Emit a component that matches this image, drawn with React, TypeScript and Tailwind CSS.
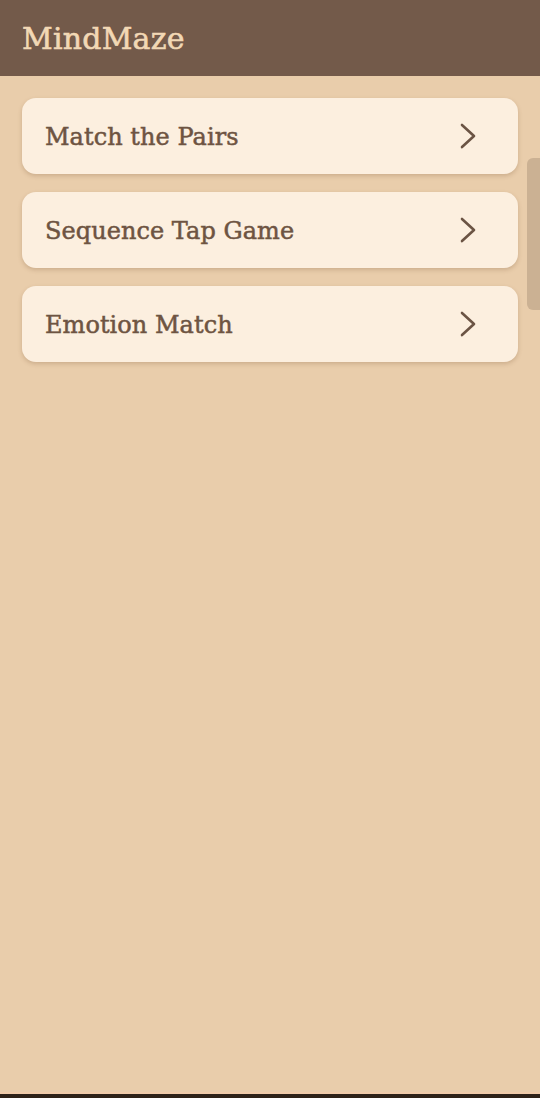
import React from 'react';

const games = ['Match the Pairs', 'Sequence Tap Game', 'Emotion Match'];

function Chevron() {
  return (
    <svg width="20" height="28" viewBox="0 0 20 28" fill="none">
      <path d="M4 3 L16 14 L4 25" stroke="#6b5444" strokeWidth="2.6" strokeLinecap="round" strokeLinejoin="round" />
    </svg>
  );
}

export default function App() {
  return (
    <div className="relative flex h-[1098px] w-[540px] flex-col overflow-hidden bg-[#e9cdab] font-['DejaVu_Serif',serif]">
      <header className="flex h-[76px] shrink-0 items-center bg-[#735a4a] px-[22px] pt-[1px]">
        <h1 className="text-[30px] leading-none tracking-[0.2px] text-[#f2d8b5] [-webkit-text-stroke:0.6px_#f2d8b5]">MindMaze</h1>
      </header>
      <main className="flex flex-1 flex-col gap-[18px] px-[22px] pt-[22px]">
        {games.map((g) => (
          <button
            key={g}
            className="flex h-[76px] items-center justify-between rounded-[14px] bg-[#fcefdf] pl-[23px] pr-[40px] shadow-[0_2px_4px_rgba(120,85,50,0.25)]"
          >
            <span className="pt-[2px] text-[24px] leading-none tracking-[0.05px] text-[#6e5442] [-webkit-text-stroke:0.5px_#6e5442]">{g}</span>
            <Chevron />
          </button>
        ))}
      </main>
      <div className="absolute right-0 top-[158px] h-[152px] w-[13px] rounded-l-[6px] bg-[#cbb193]" />
      <div className="h-[2px] bg-[#f0cbaa]" />
      <div className="h-[4px] bg-[#2e2218]" />
    </div>
  );
}
